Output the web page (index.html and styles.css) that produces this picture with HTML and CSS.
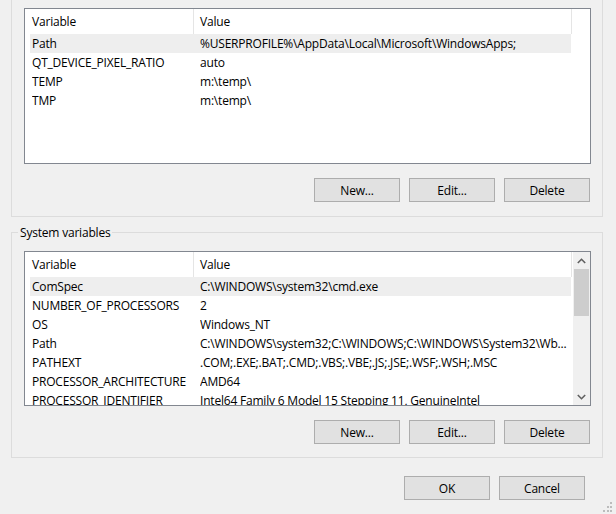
FILE: index.html
```html
<!DOCTYPE html>
<html>
<head>
<title>Environment Variables</title>
<link rel="stylesheet" href="styles.css">
</head>
<body>

<div class="dialog">

    <!-- User variables (top edge is off screen) -->
    <div class="group group-user">
        <div class="listview">
            <div class="lv-main">
                <div class="lv-head">
                    <div class="hd-cell hd-var">Variable</div>
                    <div class="hd-cell hd-val">Value</div>
                </div>
                <div class="lv-row selected"><span>Path</span><span>%USERPROFILE%\AppData\Local\Microsoft\WindowsApps;</span></div>
                <div class="lv-row"><span>QT_DEVICE_PIXEL_RATIO</span><span>auto</span></div>
                <div class="lv-row"><span>TEMP</span><span>m:\temp\</span></div>
                <div class="lv-row"><span>TMP</span><span>m:\temp\</span></div>
            </div>
        </div>
        <div class="btn-row">
            <button class="btn">New...</button>
            <button class="btn">Edit...</button>
            <button class="btn">Delete</button>
        </div>
    </div>

    <!-- System variables -->
    <fieldset class="group group-sys">
        <legend>System variables</legend>
        <div class="listview">
            <div class="lv-main">
                <div class="lv-head">
                    <div class="hd-cell hd-var">Variable</div>
                    <div class="hd-cell hd-val">Value</div>
                </div>
                <div class="lv-row selected"><span>ComSpec</span><span>C:\WINDOWS\system32\cmd.exe</span></div>
                <div class="lv-row"><span>NUMBER_OF_PROCESSORS</span><span>2</span></div>
                <div class="lv-row"><span>OS</span><span>Windows_NT</span></div>
                <div class="lv-row"><span>Path</span><span>C:\WINDOWS\system32;C:\WINDOWS;C:\WINDOWS\System32\Wb...</span></div>
                <div class="lv-row"><span>PATHEXT</span><span>.COM;.EXE;.BAT;.CMD;.VBS;.VBE;.JS;.JSE;.WSF;.WSH;.MSC</span></div>
                <div class="lv-row"><span>PROCESSOR_ARCHITECTURE</span><span>AMD64</span></div>
                <div class="lv-row"><span>PROCESSOR_IDENTIFIER</span><span>Intel64 Family 6 Model 15 Stepping 11, GenuineIntel</span></div>
            </div>
            <div class="scrollbar">
                <div class="sb-arrow">
                    <svg width="9" height="6" viewBox="0 0 9 6"><polyline points="0.8,5 4.5,1.3 8.2,5" fill="none" stroke="#606060" stroke-width="1.6"/></svg>
                </div>
                <div class="sb-track">
                    <div class="sb-thumb"></div>
                </div>
                <div class="sb-arrow">
                    <svg width="9" height="6" viewBox="0 0 9 6"><polyline points="0.8,1 4.5,4.7 8.2,1" fill="none" stroke="#606060" stroke-width="1.6"/></svg>
                </div>
            </div>
        </div>
        <div class="btn-row">
            <button class="btn">New...</button>
            <button class="btn">Edit...</button>
            <button class="btn">Delete</button>
        </div>
    </fieldset>

    <!-- Dialog buttons -->
    <div class="dlg-buttons">
        <button class="btn">OK</button>
        <button class="btn">Cancel</button>
    </div>

    <svg class="grip" width="10" height="10" viewBox="0 0 10 10">
        <rect x="8" y="0" width="2" height="2" fill="#bcbcbc"/>
        <rect x="5" y="4" width="2" height="2" fill="#bcbcbc"/>
        <rect x="8" y="4" width="2" height="2" fill="#bcbcbc"/>
        <rect x="1" y="8" width="2" height="2" fill="#bcbcbc"/>
        <rect x="5" y="8" width="2" height="2" fill="#bcbcbc"/>
        <rect x="8" y="8" width="2" height="2" fill="#bcbcbc"/>
    </svg>
</div>

</body>
</html>
```

FILE: styles.css
```css
:root {
  --dlg-bg: #f0f0f0;
  --group-border: #dcdcdc;
  --list-border: #828790;
  --btn-bg: #e1e1e1;
  --btn-border: #adadad;
  --row-selected: #eeeeee;
}

* {
    box-sizing: border-box;
}

html, body {
    margin: 0;
    height: 100%;
    overflow: hidden;
}

body {
    background-color: var(--dlg-bg);
    font-family: 'Open Sans', 'Noto Sans', sans-serif;
    font-size: 12px;
    letter-spacing: -0.2px;
    color: #000;
}

.dialog {
    position: relative;
    height: 514px;
    padding: 0 13px 0 11px;
    display: flex;
    flex-direction: column;
}

.group {
    border: 1px solid var(--group-border);
    padding: 0 11px 0 12px;
    margin: 0;
    min-width: 0;
}

.group-user {
    border-top: none;
    padding-top: 8px;
    padding-bottom: 14px;
}

.group-sys {
    margin-top: 7px;
    padding-bottom: 13px;
}

.group-sys legend {
    margin-left: -6px;
    padding: 0 2px;
    line-height: 17px;
}

.group-sys .listview {
    margin-top: 10px;
    height: 155px;
}

/* list view */
.listview {
    height: 156px;
    background: #fff;
    border: 1px solid var(--list-border);
    display: flex;
    overflow: hidden;
}

.lv-main {
    flex: 1;
    min-width: 0;
}

.lv-head {
    display: flex;
    height: 25px;
    line-height: 25px;
}

.hd-cell {
    border-right: 1px solid #e5e5e5;
    white-space: nowrap;
}

.hd-var {
    width: 169px;
    padding-left: 7px;
}

.hd-val {
    width: 378px;
    padding-left: 6px;
}

.lv-row {
    display: grid;
    grid-template-columns: 168px 1fr;
    width: 541px;
    margin-left: 5px;
    padding-left: 2px;
    height: 19px;
    line-height: 19px;
    white-space: nowrap;
}

.lv-row span {
    overflow: hidden;
}

.lv-row.selected {
    background-color: var(--row-selected);
}

/* scroll bar */
.scrollbar {
    width: 17px;
    background: var(--dlg-bg);
    display: flex;
    flex-direction: column;
}

.sb-arrow {
    height: 17px;
    display: flex;
    align-items: center;
    justify-content: center;
}

.sb-track {
    flex: 1;
}

.sb-thumb {
    height: 47px;
    margin: 0 1px;
    background: #cdcdcd;
}

/* buttons */
.btn-row {
    display: flex;
    justify-content: flex-end;
    gap: 9px;
    margin-top: 14px;
    padding-right: 1px;
}

.btn {
    width: 86px;
    height: 24px;
    padding: 0;
    background: var(--btn-bg);
    border: 1px solid var(--btn-border);
    font-family: inherit;
    font-size: 12px;
    letter-spacing: -0.2px;
    color: #000;
}

.dlg-buttons {
    display: flex;
    justify-content: flex-end;
    gap: 9px;
    margin-top: 18px;
    padding-right: 18px;
}

.grip {
    position: absolute;
    right: 4px;
    bottom: 2px;
}
```
